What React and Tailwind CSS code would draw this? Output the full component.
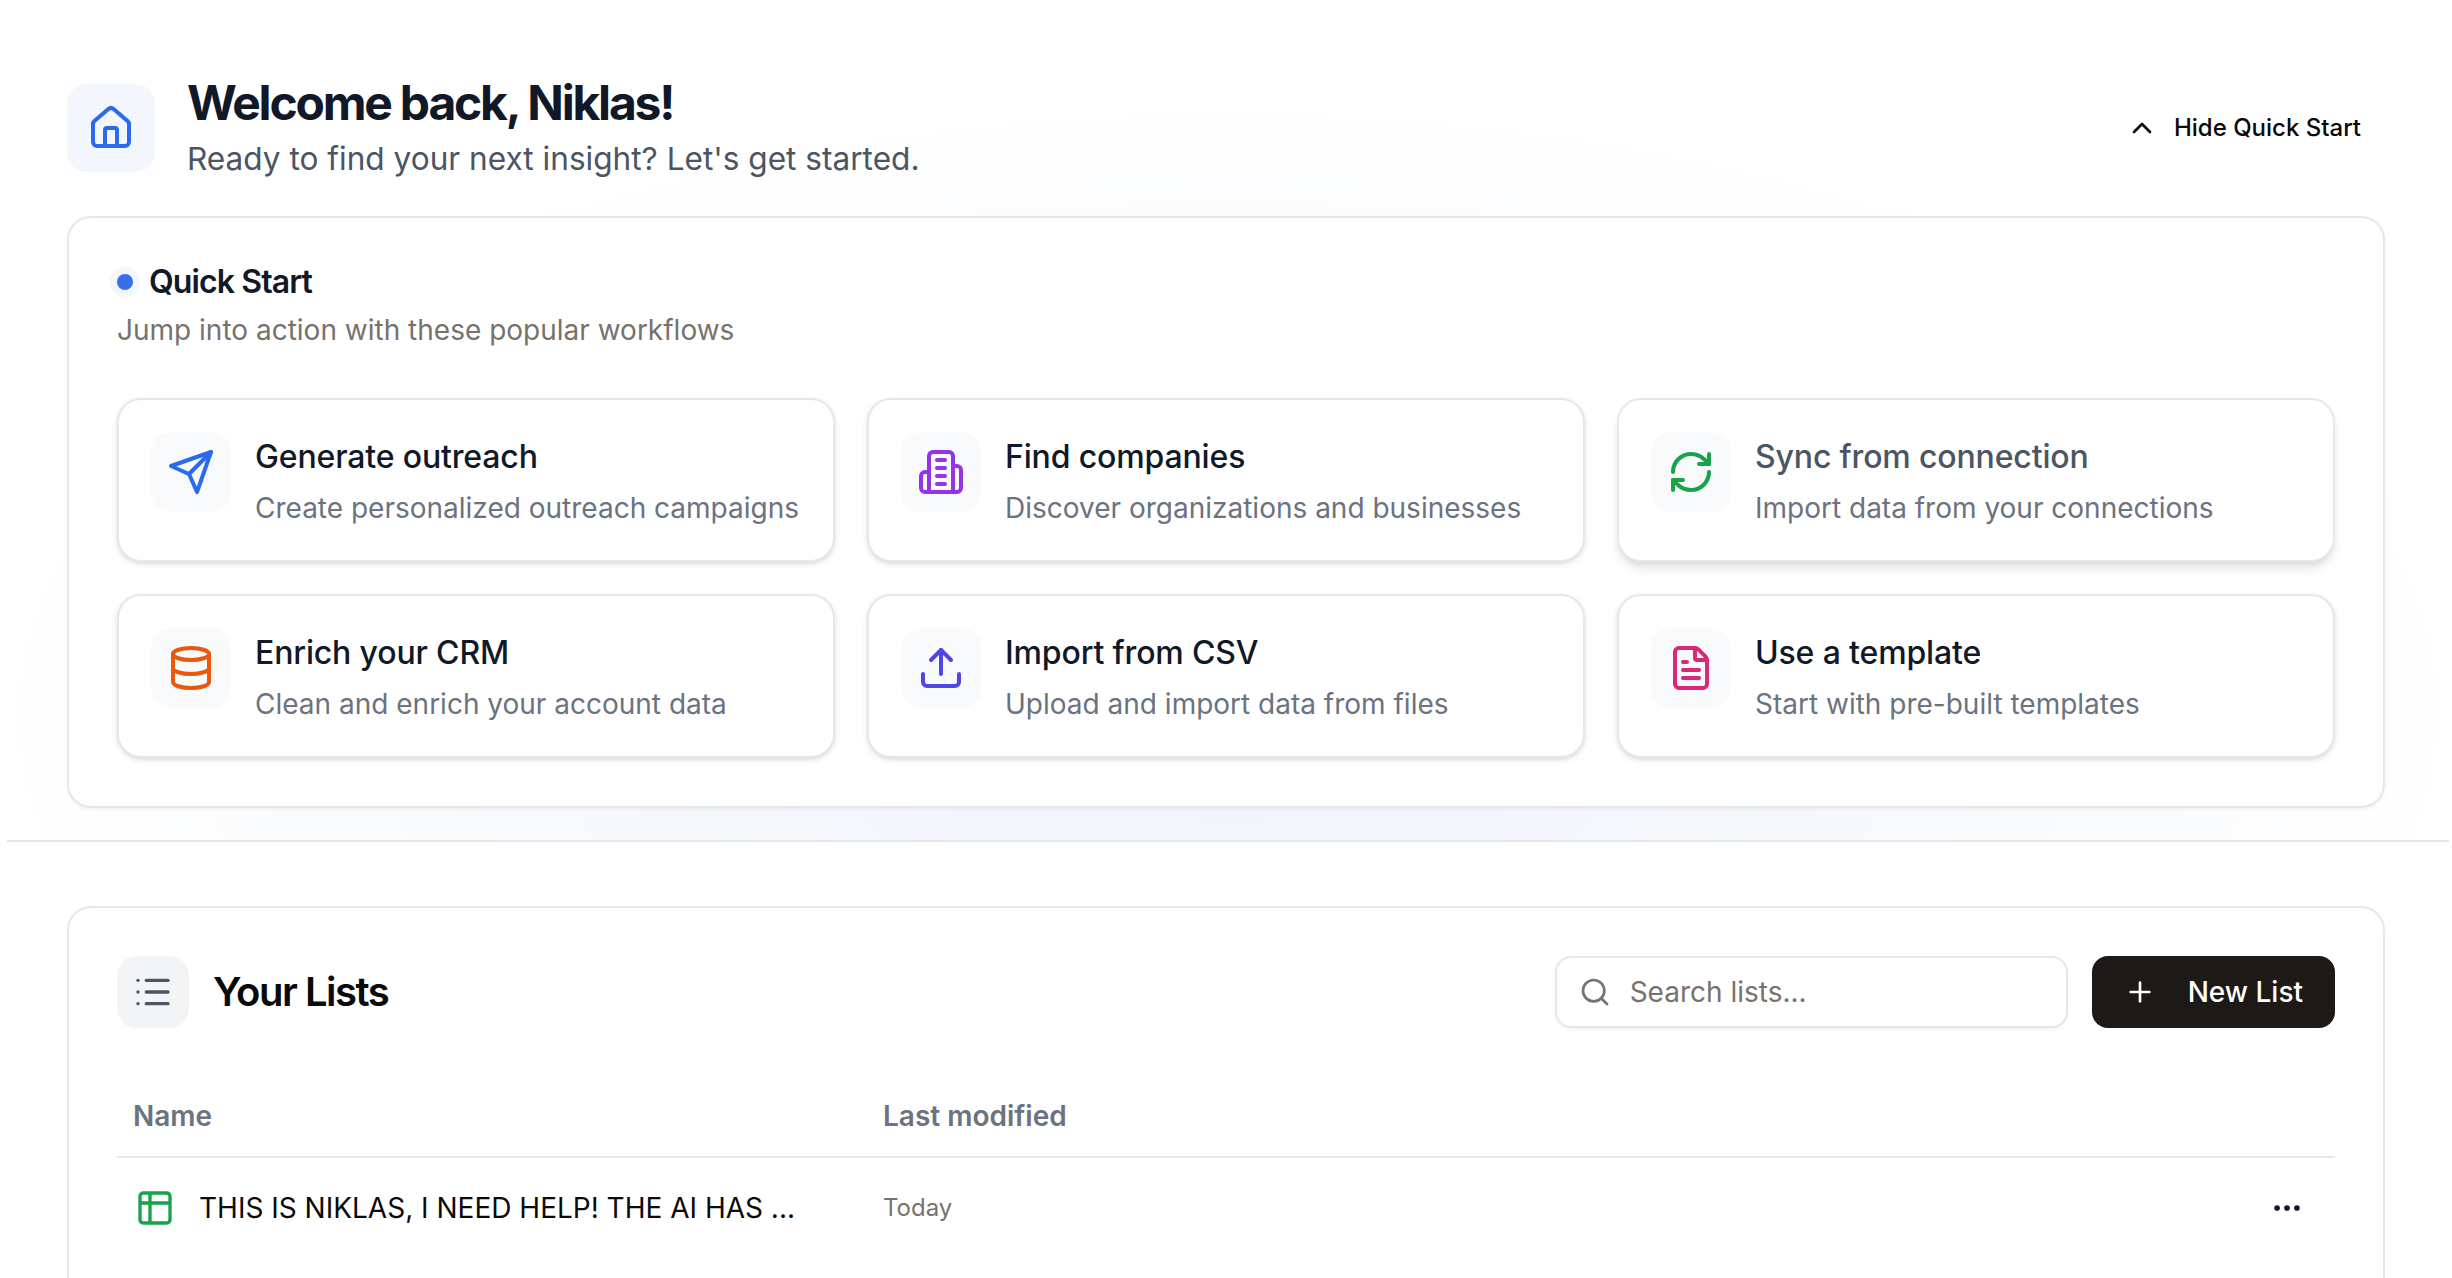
import React from "react";
import { House, ChevronUp, RefreshCw, Database, Upload, FileText, List, Search, Plus, Table2, Ellipsis } from "lucide-react";

function Building({ className }) {
  return (
    <svg viewBox="0 0 24 24" fill="none" stroke="currentColor" strokeWidth="2" strokeLinecap="round" strokeLinejoin="round" className={className}>
      <path d="M6 22V4a2 2 0 0 1 2-2h8a2 2 0 0 1 2 2v18Z" />
      <path d="M6 12H4a2 2 0 0 0-2 2v6a2 2 0 0 0 2 2h2" />
      <path d="M18 9h2a2 2 0 0 1 2 2v9a2 2 0 0 1-2 2h-2" />
      <path d="M10 6h4" />
      <path d="M10 10h4" />
      <path d="M10 14h4" />
      <path d="M10 18h4" />
    </svg>
  );
}

function Plane({ className }) {
  return (
    <svg viewBox="0 0 24 24" fill="none" stroke="currentColor" strokeWidth="2" strokeLinecap="round" strokeLinejoin="round" className={className}>
      <path d="m22 2-7 20-4-9-9-4Z" />
      <path d="M22 2 11 13" />
    </svg>
  );
}

function Card({ icon: Icon, color, title, sub, hover }) {
  return (
    <div className={`flex h-[164px] gap-[24px] rounded-[24px] border-2 border-[#e5e7eb] bg-white p-[32px] ${hover ? "shadow-[0_8px_12px_-2px_rgba(0,0,0,0.1),0_4px_8px_-4px_rgba(0,0,0,0.1)]" : "shadow-[0_2px_6px_0_rgba(0,0,0,0.1),0_2px_4px_-2px_rgba(0,0,0,0.1)]"}`}>
      <div className="flex h-[80px] w-[80px] shrink-0 items-center justify-center rounded-[20px] bg-[#f9fafb]">
        <Icon className={`h-[48px] w-[48px] ${color}`} />
      </div>
      <div className="flex min-w-0 flex-col">
        <div className={`text-[32px] font-medium leading-[50px] tracking-[-0.15px] ${hover ? "text-[#4b5563]" : "text-[#111827]"}`}>{title}</div>
        <div className="mt-[6px] text-[28px] leading-[40px] text-[#6b7280]">{sub}</div>
      </div>
    </div>
  );
}

export default function App() {
  const cards = [
    { icon: Plane, color: "text-[#2a6af0]", title: "Generate outreach", sub: "Create personalized outreach campaigns" },
    { icon: Building, color: "text-[#9333ea]", title: "Find companies", sub: "Discover organizations and businesses" },
    { icon: RefreshCw, color: "text-[#16a34a]", title: "Sync from connection", sub: "Import data from your connections", hover: true },
    { icon: Database, color: "text-[#ea580c]", title: "Enrich your CRM", sub: "Clean and enrich your account data" },
    { icon: Upload, color: "text-[#4f46e5]", title: "Import from CSV", sub: "Upload and import data from files" },
    { icon: FileText, color: "text-[#db2777]", title: "Use a template", sub: "Start with pre-built templates" },
  ];
  return (
    <div className="h-[1278px] w-full overflow-hidden bg-white font-['Inter',sans-serif]">
      <div className="ml-[7px] mr-[3px] border-b-2 border-[#e5e7eb] bg-[radial-gradient(ellipse_1250px_620px_at_50%_85%,#f0f4fa_0%,#f7f9fc_55%,#ffffff_100%)] pb-[32px] pl-[60px] pr-[64px] pt-[84px]">
        <div className="mb-[44px] flex h-[88px] items-center justify-between">
          <div className="flex items-center gap-[32px]">
            <div className="flex h-[88px] w-[88px] items-center justify-center rounded-[20px] bg-[#f3f6fc]">
              <House className="h-[48px] w-[48px] text-[#2a6af0]" />
            </div>
            <div className="flex flex-col">
              <h1 className="mt-[2px] text-[48px] font-bold leading-[48px] tracking-[-2.2px] text-[#111827]">Welcome back, Niklas!</h1>
              <p className="mt-[12px] text-[31.6px] leading-[40px] text-[#4b5563]">Ready to find your next insight? Let's get started.</p>
            </div>
          </div>
          <button className="flex items-center gap-[16px] pr-[24px] text-[24px] font-medium text-[#0a0a0a]">
            <ChevronUp className="h-[32px] w-[32px]" />
            Hide Quick Start
          </button>
        </div>

        <section className="rounded-[24px] border-2 border-[#e5e7eb] bg-white p-[48px] shadow-[0_2px_4px_0_rgba(0,0,0,0.05)]">
          <div className="flex items-center gap-[10px]">
            <span className="h-[16px] w-[16px] rounded-full bg-[#3a6ee8] shadow-[0_0_0_7px_#f3f6fc]" />
            <h2 className="ml-[6px] text-[32px] font-semibold leading-[32px] tracking-[-0.9px] text-[#111827]">Quick Start</h2>
          </div>
          <p className="mt-[14px] text-[28px] leading-[36px] text-[#78716c]">Jump into action with these popular workflows</p>
          <div className="mt-[50px] grid grid-cols-3 gap-[32px]">
            {cards.map((c) => (
              <Card key={c.title} {...c} />
            ))}
          </div>
        </section>
      </div>

      <div className="ml-[67px] mr-[67px] mt-[64px] min-h-[600px] rounded-t-[24px] border-2 border-b-0 border-[#e5e7eb] bg-white p-[48px] pb-0">
        <div className="flex h-[72px] items-center justify-between">
          <div className="flex items-center gap-[24px]">
            <div className="flex h-[72px] w-[72px] items-center justify-center rounded-[20px] bg-[#f3f4f6]">
              <List className="h-[40px] w-[40px] text-[#4b5563]" />
            </div>
            <h2 className="text-[40px] font-semibold tracking-[-1.5px] text-[#0a0a0a]">Your Lists</h2>
          </div>
          <div className="flex items-center gap-[24px]">
            <div className="flex h-[72px] w-[513px] items-center gap-[19px] rounded-[16px] border-2 border-[#e5e7eb] bg-white px-[22px] shadow-[0_2px_3px_0_rgba(0,0,0,0.05)]">
              <Search className="h-[32px] w-[32px] text-[#78716c]" />
              <span className="text-[28px] text-[#78716c]">Search lists...</span>
            </div>
            <button className="flex h-[72px] items-center gap-[32px] rounded-[16px] bg-[#1c1917] px-[32px] text-[28px] font-medium text-white">
              <Plus className="h-[32px] w-[32px]" />
              New List
            </button>
          </div>
        </div>

        <div className="mt-[48px] grid h-[82px] grid-cols-[751px_1fr] items-center border-b-2 border-[#e5e7eb] text-[28px] font-semibold text-[#6b7280]">
          <div className="pl-[16px]">Name</div>
          <div className="pl-[15px]">Last modified</div>
        </div>
        <div className="grid h-[99px] grid-cols-[751px_1fr_auto] items-center">
          <div className="flex items-center gap-[24px] pl-[18px]">
            <Table2 className="h-[40px] w-[40px] text-[#16a34a]" />
            <span className="text-[28px] text-[#0a0a0a]">THIS IS NIKLAS, I NEED HELP! THE AI HAS ...</span>
          </div>
          <div className="pl-[15px] text-[24px] text-[#78716c]">Today</div>
          <div className="pr-[31px]">
            <Ellipsis className="h-[34px] w-[34px] text-[#111827]" />
          </div>
        </div>
      </div>
    </div>
  );
}
